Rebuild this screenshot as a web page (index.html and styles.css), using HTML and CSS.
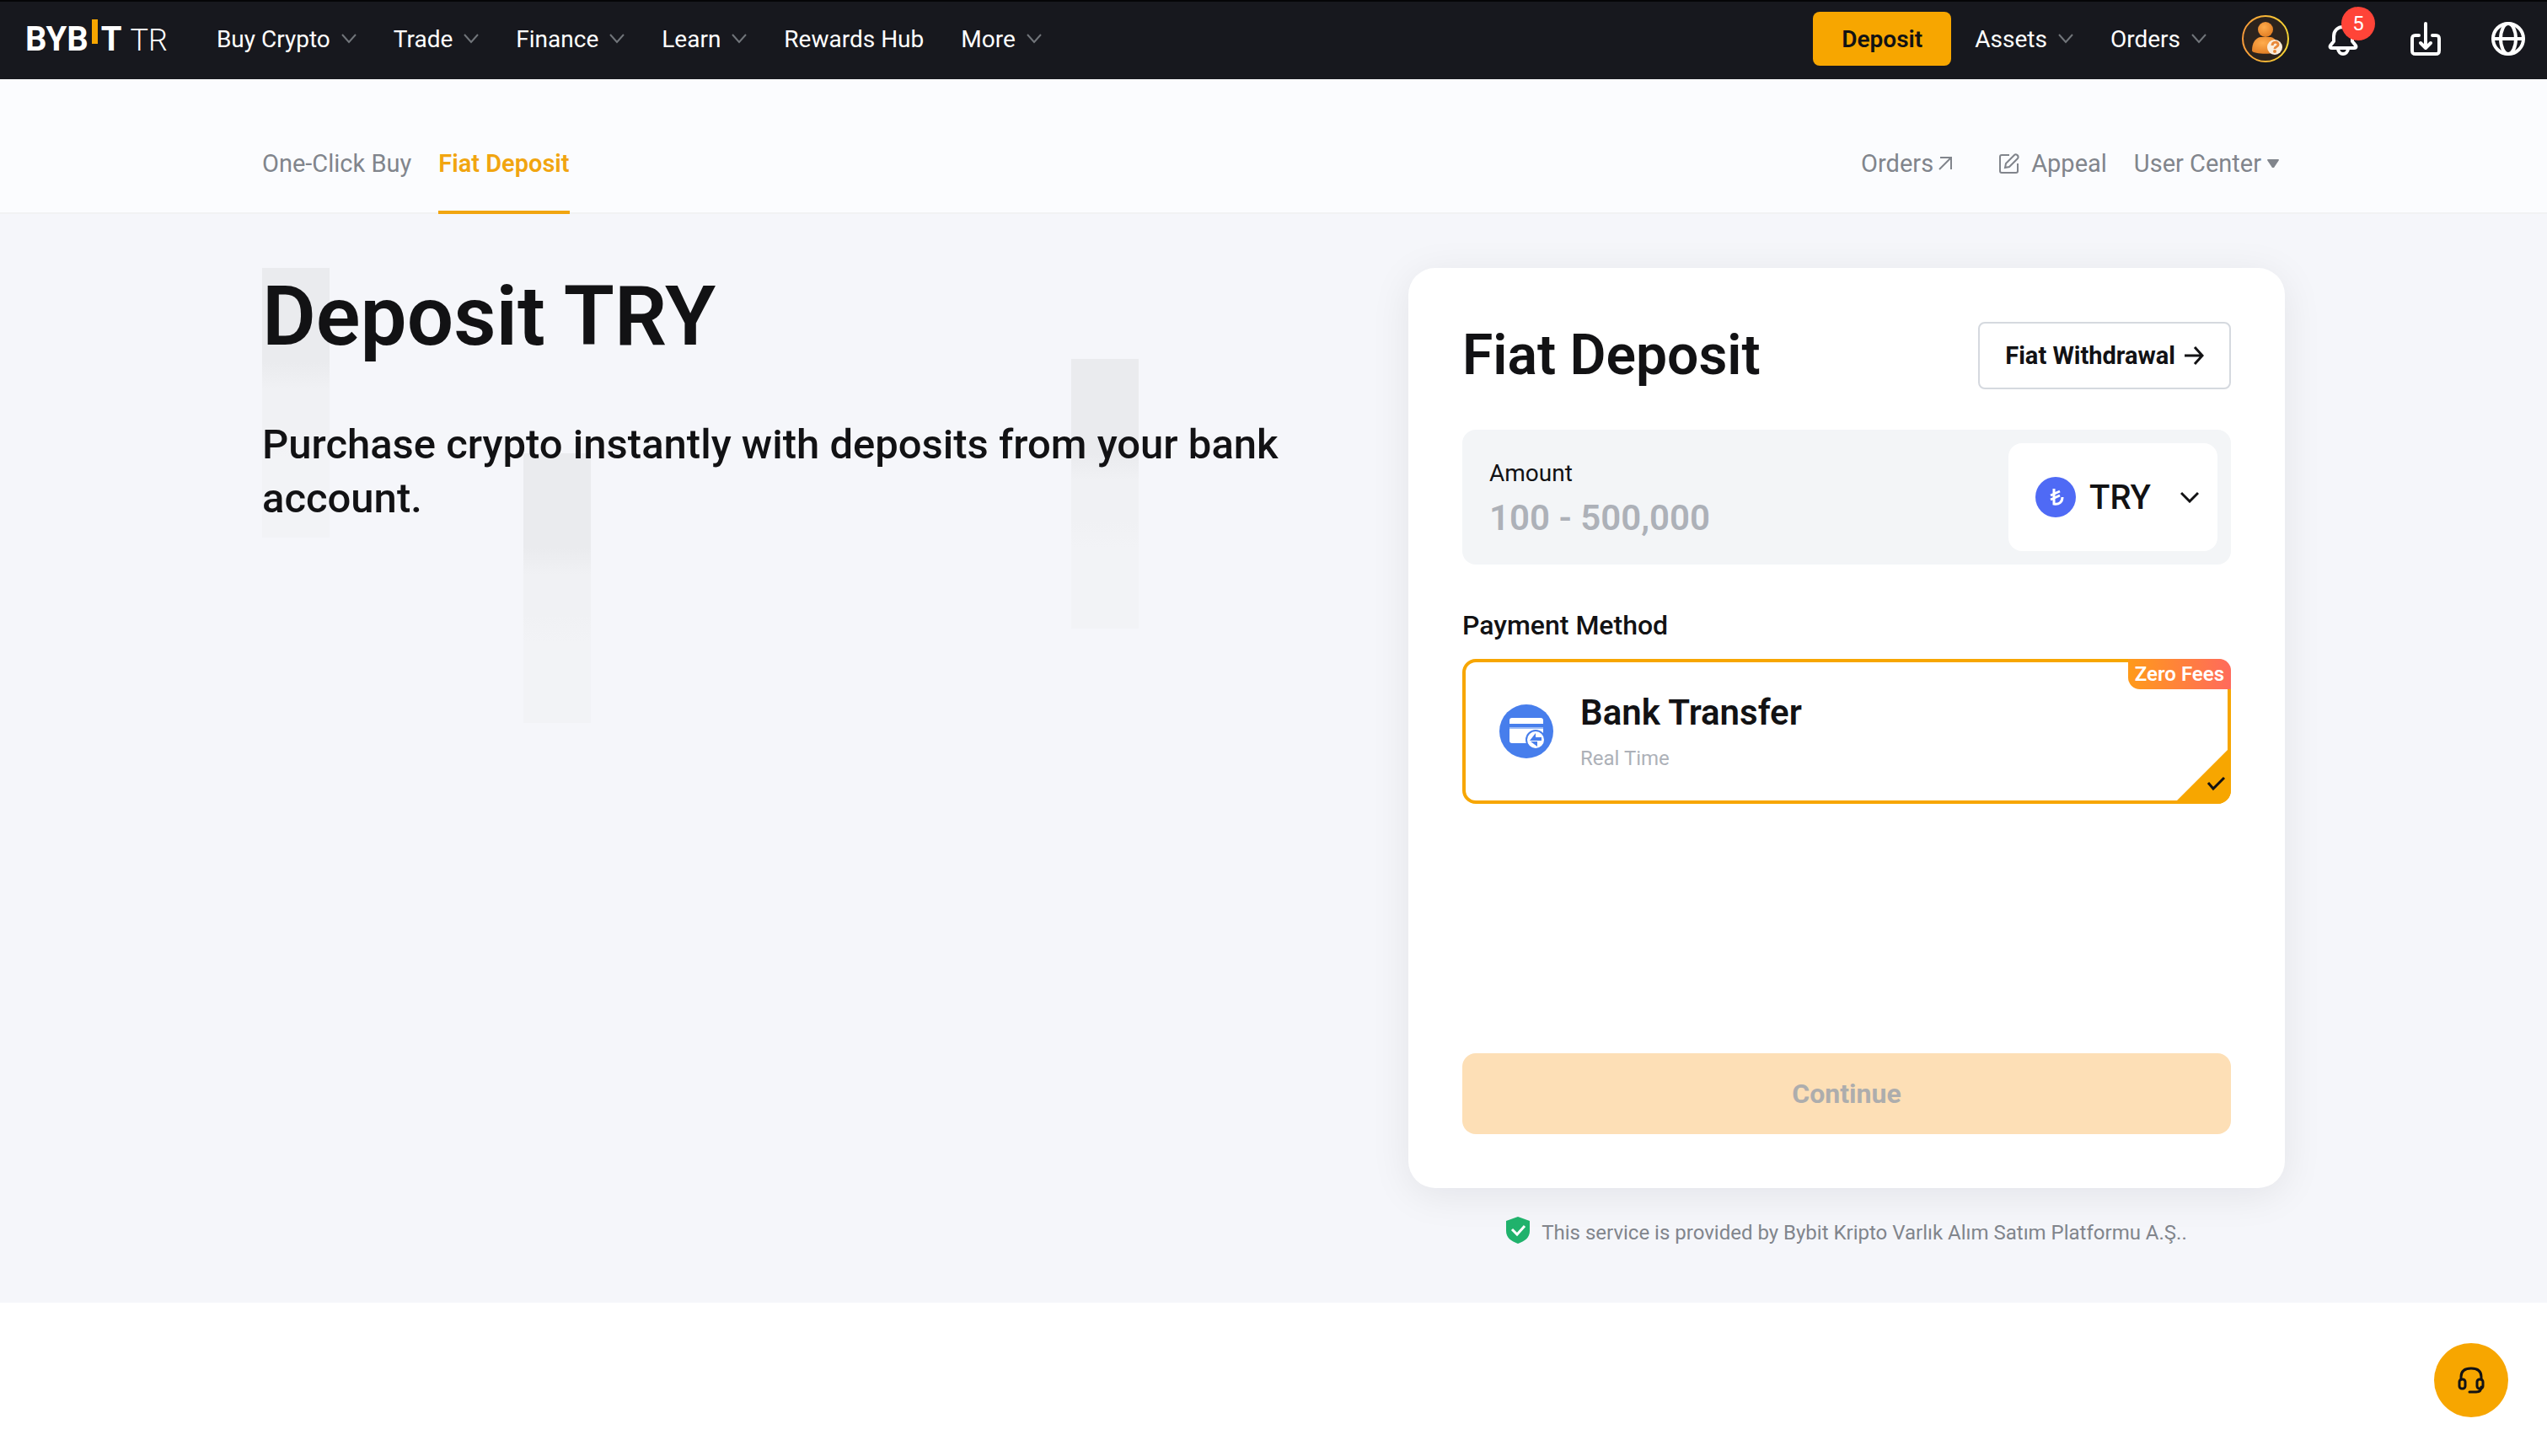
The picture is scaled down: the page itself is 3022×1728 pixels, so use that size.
FILE: index.html
```
<!DOCTYPE html>
<html lang="en">
<head>
    <meta charset="UTF-8">
    <meta name="viewport" content="width=device-width, initial-scale=1.0">
    <title>Fiat Deposit | Bybit TR</title>
    <link rel="stylesheet" href="styles.css">
</head>
<body>
    <!-- Top bar -->
    <header class="header">
        <a href="#" class="logo">BYB<span class="logo-bar"></span>T<span class="logo-region">TR</span></a>
        <nav class="nav">
            <a href="#">Buy Crypto <svg class="chevron" viewBox="0 0 18 12"><path d="M1 1l8 9 8-9"/></svg></a>
            <a href="#">Trade <svg class="chevron" viewBox="0 0 18 12"><path d="M1 1l8 9 8-9"/></svg></a>
            <a href="#">Finance <svg class="chevron" viewBox="0 0 18 12"><path d="M1 1l8 9 8-9"/></svg></a>
            <a href="#">Learn <svg class="chevron" viewBox="0 0 18 12"><path d="M1 1l8 9 8-9"/></svg></a>
            <a href="#">Rewards Hub</a>
            <a href="#">More <svg class="chevron" viewBox="0 0 18 12"><path d="M1 1l8 9 8-9"/></svg></a>
        </nav>
        <button type="button" class="deposit-btn">Deposit</button>
        <nav class="nav">
            <a href="#">Assets <svg class="chevron" viewBox="0 0 18 12"><path d="M1 1l8 9 8-9"/></svg></a>
            <a href="#">Orders <svg class="chevron" viewBox="0 0 18 12"><path d="M1 1l8 9 8-9"/></svg></a>
        </nav>
        <button type="button" class="avatar" aria-label="Account">
            <svg viewBox="0 0 56 56">
                <defs>
                    <linearGradient id="ring" x1="0" x2="1"><stop offset="0" stop-color="#f79a3a"/><stop offset="1" stop-color="#f7d433"/></linearGradient>
                    <radialGradient id="skin" cx=".4" cy=".35" r=".7"><stop offset="0" stop-color="#ffac4c"/><stop offset="1" stop-color="#e07c22"/></radialGradient>
                </defs>
                <circle cx="28" cy="28" r="27" fill="#2c231d" stroke="url(#ring)" stroke-width="2"/>
                <path d="M12 42c0-9 4-15 10-16h12c6 1 10 7 10 16 0 5-32 5-32 0z" fill="url(#skin)"/>
                <circle cx="28" cy="17" r="9" fill="url(#skin)"/>
                <circle cx="39" cy="38" r="9" fill="#fbeedd"/>
                <path d="M36 36c0-5 7-5 7-1 0 3-4 2-4 5" fill="none" stroke="#e8893a" stroke-width="3"/>
                <circle cx="39" cy="43" r="2" fill="#e8893a"/>
            </svg>
        </button>
        <div class="tools">
            <button type="button" class="tool" aria-label="Notifications">
                <svg viewBox="0 0 40 40"><path d="M9 23v-6c0-7 5-11 11-11s11 4 11 11v6l4 5c1 2 0 3-2 3H7c-2 0-3-1-2-3zM14 32c1 8 11 8 12 0"/></svg>
                <span class="count">5</span>
            </button>
            <button type="button" class="tool" aria-label="Download app">
                <svg viewBox="0 0 40 40"><path d="M12 16H8c-3 0-4 1-4 4v14c0 3 1 4 4 4h24c3 0 4-1 4-4V20c0-3-1-4-4-4h-4M20 2v28M14 25l6 6 6-6"/></svg>
            </button>
            <button type="button" class="tool" aria-label="Language">
                <svg viewBox="0 0 40 40"><circle cx="20" cy="20" r="18"/><ellipse cx="20" cy="20" rx="9" ry="18"/><path d="M2 20h36"/></svg>
            </button>
        </div>
    </header>

    <!-- Section tabs -->
    <div class="subnav">
        <div class="container subnav-inner">
            <a href="#" class="tab">One-Click Buy</a>
            <a href="#" class="tab active">Fiat Deposit</a>
            <a href="#" class="tab orders">Orders
                <svg width="16" height="16" viewBox="0 0 16 16"><path d="M2 1h13v14M15 1L1 15"/></svg>
            </a>
            <a href="#" class="tab appeal">
                <svg width="24" height="24" viewBox="0 0 24 24"><path d="M12 2H3c-1 0-2 1-2 2v17c0 1 1 2 2 2h17c1 0 2-1 2-2v-9M7 17l1-5L18 2c2-2 6 1 4 4L12 16z"/></svg>
                Appeal
            </a>
            <a href="#" class="tab">User Center
                <svg width="16" height="12" viewBox="0 0 16 12"><path class="solid" d="M2 1h12c1 0 1 1 1 1L9 11H7L1 2s0-1 1-1z"/></svg>
            </a>
        </div>
    </div>

    <main class="main">
        <div class="container main-inner">
            <section class="intro">
                <span class="bar bar-1"></span>
                <span class="bar bar-2"></span>
                <span class="bar bar-3"></span>
                <h1>Deposit TRY</h1>
                <p>Purchase crypto instantly with deposits from your bank account.</p>
            </section>

            <section class="side">
                <form class="card">
                    <div class="card-head">
                        <h2>Fiat Deposit</h2>
                        <button type="button" class="withdraw-btn">Fiat Withdrawal
                            <svg width="24" height="24" viewBox="0 0 24 24"><path d="M1 12h21M13 2l9 10-9 10"/></svg>
                        </button>
                    </div>

                    <div class="amount">
                        <div class="amount-field">
                            <label for="amount">Amount</label>
                            <input type="text" id="amount" placeholder="100 - 500,000">
                        </div>
                        <div class="currency">
                            <svg class="coin" viewBox="0 0 48 48"><circle cx="24" cy="24" r="24" fill="#4f6af5"/><path d="M22 14v18c6 1 10-2 10-8M18 22l11-5M18 27l11-5" fill="none" stroke="#fff" stroke-width="3"/></svg>
                            <select aria-label="Currency">
                                <option>TRY</option>
                            </select>
                            <svg class="arrow" width="22" height="14" viewBox="0 0 22 14"><path d="M1 2l10 10L21 2"/></svg>
                        </div>
                    </div>

                    <fieldset class="methods">
                        <legend>Payment Method</legend>
                        <label class="method">
                            <input type="radio" name="method" checked>
                            <svg class="method-icon" viewBox="0 0 64 64">
                                <circle cx="32" cy="32" r="32" fill="#477eec"/>
                                <path d="M15 16h34q3 0 3 3v4H12v-4q0-3 3-3z" fill="#fff"/>
                                <path d="M12 27h40v2H12z" fill="#9dbcf6"/>
                                <path d="M12 29h40v14q0 3-3 3H15q-3 0-3-3z" fill="#fff"/>
                                <circle cx="43" cy="42" r="11" fill="#fff" stroke="#477eec" stroke-width="2"/>
                                <path d="M43 34v5h7v4H36zM45 50v-6h-8z" fill="#477eec"/>
                            </svg>
                            <span class="method-text">
                                <strong>Bank Transfer</strong>
                                <small>Real Time</small>
                            </span>
                            <span class="fee-tag">Zero Fees</span>
                            <svg class="corner" viewBox="0 0 68 68"><path d="M68 0v68H0z" fill="#f7a600"/><path d="M41 43l6 7 13-13" fill="none" stroke="#121214" stroke-width="3"/></svg>
                        </label>
                    </fieldset>

                    <button type="submit" class="continue-btn" disabled>Continue</button>
                </form>

                <p class="provider">
                    <svg width="28" height="32" viewBox="0 0 28 32"><path d="M14 0l14 5v12c0 8-6 12-14 15C6 29 0 25 0 17V5z" fill="#20b26c"/><path d="M7 15l6 6 9-10" fill="none" stroke="#fff" stroke-width="3"/></svg>
                    This service is provided by Bybit Kripto Varlık Alım Satım Platformu A.Ş..
                </p>
            </section>
        </div>
    </main>

    <button type="button" class="support" aria-label="Support">
        <svg width="32" height="32" viewBox="0 0 32 32"><path d="M4 15v-3C4 5 8 2 16 2s12 3 12 10v3M28 24c0 4-2 6-6 6h-8"/><rect x="2" y="15" width="7" height="11" rx="3"/><rect x="23" y="15" width="7" height="11" rx="3"/></svg>
    </button>
</body>
</html>
```

FILE: styles.css
```
* {
    box-sizing: border-box;
}
body {
    margin: 0;
    font-family: Roboto, "Liberation Sans", sans-serif;
    font-size: 28px;
    color: #121214;
    background: #fff;
}
a {
    color: inherit;
    text-decoration: none;
}
button, input, select {
    font-family: inherit;
    font-size: inherit;
    color: inherit;
    border: none;
    padding: 0;
}
button {
    cursor: pointer;
}
h1, h2, p {
    margin: 0;
}
svg {
    flex: none;
}
.container {
    max-width: 2400px;
    margin: 0 auto;
}

/* Top bar */
.header {
    display: flex;
    align-items: center;
    height: 94px;
    padding: 0 26px 2px 30px;
    color: #fff;
    background: #17181e;
    box-shadow: inset 0 2px #050507;
}
.logo {
    display: flex;
    align-items: baseline;
    margin-right: 58px;
    font-size: 40px;
    font-weight: 700;
}
.logo-bar {
    width: 7px;
    height: 37px;
    margin: 0 4px;
    padding-bottom: 8px;
    background: #f7a600 content-box;
}
.logo-region {
    margin-left: 10px;
    font-size: 36px;
    font-weight: 300;
}
.nav {
    display: flex;
    gap: 44px;
}
.nav a {
    display: flex;
    align-items: center;
    gap: 13px;
}
.chevron {
    width: 18px;
    height: 12px;
    fill: none;
    stroke: #71757a;
    stroke-width: 2;
}
.deposit-btn {
    height: 64px;
    margin: 0 28px 0 auto;
    padding: 0 34px;
    font-weight: 600;
    color: #121214;
    background: #f7a600;
    border-radius: 8px;
}
.avatar {
    width: 56px;
    height: 56px;
    margin: 0 44px 0 42px;
    background: none;
}
.avatar svg, .tool svg {
    display: block;
}
.tools {
    display: flex;
    gap: 58px;
}
.tool {
    position: relative;
    width: 40px;
    height: 40px;
    background: none;
}
.tool svg {
    fill: none;
    stroke: #fff;
    stroke-width: 4;
    stroke-linecap: round;
    stroke-linejoin: round;
}
.count {
    position: absolute;
    top: -18px;
    left: 18px;
    width: 40px;
    height: 40px;
    font-size: 24px;
    line-height: 40px;
    text-align: center;
    color: #fff;
    background: #ff4438;
    border-radius: 50%;
}

/* Section tabs */
.subnav {
    height: 160px;
    padding-top: 40px;
    font-size: 29px;
    color: #81858c;
    background: #fbfcfe;
    border-bottom: 2px solid #f1f2f3;
}
.subnav-inner {
    display: flex;
    gap: 32px;
    padding-right: 6px;
}
.tab {
    display: flex;
    align-items: center;
    gap: 6px;
    height: 120px;
}
.tab svg {
    fill: none;
    stroke: #81858c;
    stroke-width: 2;
}
.tab .solid {
    fill: #81858c;
    stroke: none;
}
.tab.active {
    font-weight: 600;
    color: #f1a510;
    border-top: 4px solid transparent;
    border-bottom: 4px solid #f1a510;
}
.orders {
    margin-left: auto;
}
.appeal {
    gap: 14px;
    margin-left: 24px;
}

/* Main area */
.main {
    padding: 64px 0;
    background: #f5f6fa;
}
.main-inner {
    display: flex;
    justify-content: space-between;
}
.intro {
    position: relative;
    z-index: 0;
    width: 1260px;
}
.intro h1 {
    font-size: 98px;
    font-weight: 600;
    line-height: 116px;
}
.intro p {
    margin-top: 62px;
    font-size: 49px;
    font-weight: 500;
    line-height: 64px;
}
.bar {
    position: absolute;
    z-index: -1;
    width: 80px;
    height: 320px;
    background: linear-gradient(#eaebee 35%, #f0f1f4 45%, #f0f1f4 60%, #f2f3f6 70%);
}
.bar-1 {
    top: 0;
    left: 0;
}
.bar-2 {
    top: 220px;
    left: 310px;
}
.bar-3 {
    top: 108px;
    left: 960px;
}

/* Deposit card */
.side {
    width: 1040px;
}
.card {
    padding: 64px;
    background: #fff;
    border-radius: 32px;
    box-shadow: 0 8px 48px rgba(18, 18, 20, 0.08);
}
.card-head {
    display: flex;
    justify-content: space-between;
    align-items: center;
}
.card-head h2 {
    font-size: 66px;
    font-weight: 600;
    line-height: 80px;
}
.withdraw-btn {
    display: flex;
    align-items: center;
    gap: 10px;
    height: 80px;
    padding: 0 30px;
    font-size: 29px;
    font-weight: 700;
    background: #fff;
    border: 2px solid #d5d9df;
    border-radius: 8px;
}
.withdraw-btn svg, .arrow {
    fill: none;
    stroke: #121214;
    stroke-width: 3;
}
.amount {
    display: flex;
    align-items: center;
    margin-top: 48px;
    padding: 16px 16px 16px 32px;
    background: #f3f5f7;
    border-radius: 16px;
}
.amount-field {
    flex: 1;
}
.amount-field label {
    display: block;
    line-height: 48px;
}
.amount-field input {
    display: block;
    width: 100%;
    height: 56px;
    font-size: 42px;
    font-weight: 600;
    background: none;
}
.amount-field input::placeholder {
    color: #adb1b8;
}
.currency {
    display: flex;
    align-items: center;
    gap: 16px;
    width: 248px;
    height: 128px;
    padding: 0 22px 0 32px;
    background: #fff;
    border-radius: 16px;
}
.coin {
    width: 48px;
    height: 48px;
}
.currency select {
    flex: 1;
    min-width: 0;
    font-size: 40px;
    font-weight: 500;
    background: none;
    appearance: none;
}
.methods {
    min-height: 532px;
    margin: 48px 0 0;
    padding: 0;
    border: none;
}
.methods legend {
    padding: 0 0 16px;
    font-size: 32px;
    font-weight: 500;
    line-height: 48px;
}
.method {
    position: relative;
    display: flex;
    align-items: center;
    gap: 32px;
    height: 172px;
    padding-left: 40px;
    border: 4px solid #f7a600;
    border-radius: 16px;
}
.method input {
    position: absolute;
    opacity: 0;
}
.method-icon {
    width: 64px;
    height: 64px;
}
.method-text {
    display: flex;
    flex-direction: column;
}
.method-text strong {
    font-size: 42px;
    font-weight: 600;
    line-height: 64px;
}
.method-text small {
    font-size: 24px;
    line-height: 44px;
    color: #adb1b8;
}
.fee-tag {
    position: absolute;
    top: -4px;
    right: -4px;
    padding: 0 8px;
    font-size: 24px;
    font-weight: 600;
    line-height: 36px;
    color: #fff;
    background: linear-gradient(90deg, #ff9a1a, #ff6a5c);
    border-radius: 0 14px 0 14px;
}
.corner {
    position: absolute;
    right: -4px;
    bottom: -4px;
    width: 68px;
    height: 68px;
    border-bottom-right-radius: 16px;
}
.continue-btn {
    width: 100%;
    height: 96px;
    font-size: 32px;
    font-weight: 700;
    color: #adadad;
    background: #fddfb6;
    border-radius: 16px;
}
.provider {
    display: flex;
    justify-content: center;
    gap: 14px;
    margin-top: 34px;
    font-size: 24px;
    line-height: 38px;
    color: #81858c;
}

/* Floating support button */
.support {
    position: fixed;
    right: 46px;
    bottom: 46px;
    display: flex;
    justify-content: center;
    align-items: center;
    width: 88px;
    height: 88px;
    background: #f7a600;
    border-radius: 50%;
}
.support svg {
    fill: none;
    stroke: #121214;
    stroke-width: 3;
    stroke-linecap: round;
}
```
